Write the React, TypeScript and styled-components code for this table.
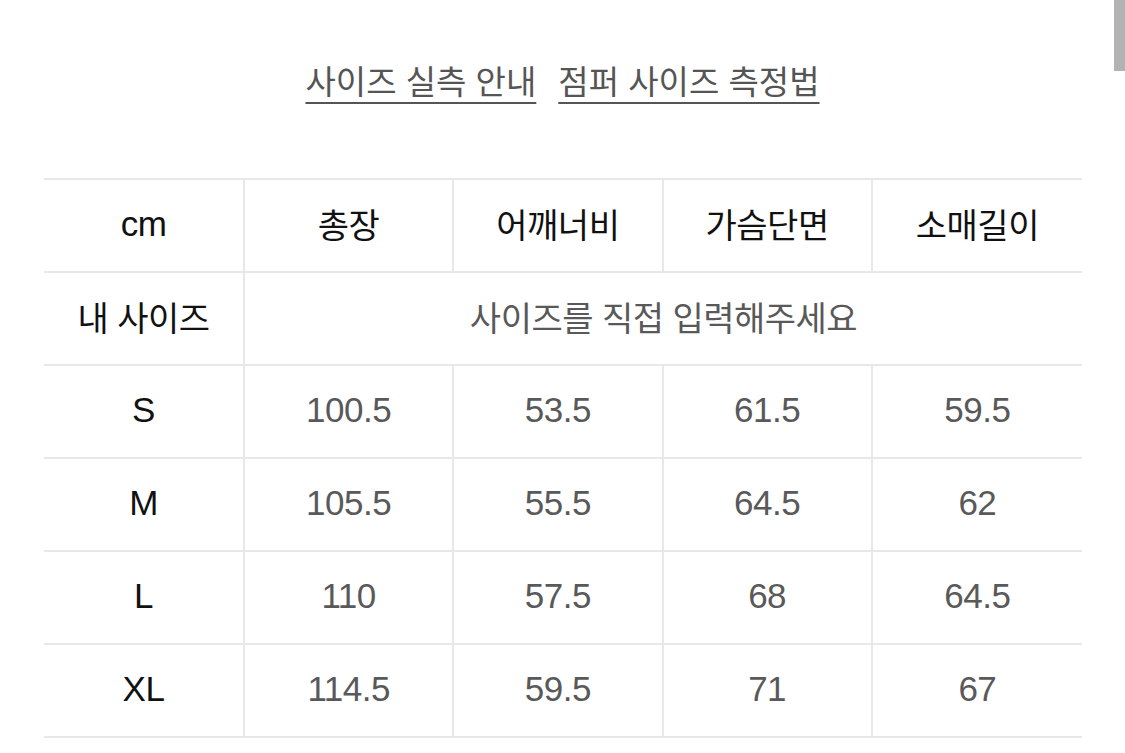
import React from "react";
import styled, { createGlobalStyle } from "styled-components";

const Global = createGlobalStyle`
  html, body { margin: 0; padding: 0; background: #fff; }
  body { font-family: "Liberation Sans", "Noto Sans CJK KR", sans-serif; overflow: hidden; }
`;

const Page = styled.div`
  position: relative;
  width: 1125px;
  height: 753px;
  background: #fff;
  padding: 0 44px;
  box-sizing: border-box;
`;

const Scrollbar = styled.div`
  position: absolute;
  top: 0;
  right: 0;
  width: 11px;
  height: 71px;
  background: #b3b3b3;
`;

const Links = styled.div`
  display: flex;
  justify-content: center;
  gap: 22px;
  padding-top: 61px;
  height: 178px;
  box-sizing: border-box;
`;

const LinkText = styled.a`
  font-family: "Liberation Sans", "Noto Sans CJK KR", sans-serif;
  font-size: 33px;
  line-height: 44px;
  color: #555;
  text-decoration: underline;
  text-decoration-thickness: 2px;
  text-underline-offset: 8px;
`;

const Table = styled.div`
  display: grid;
  grid-template-columns: 201px repeat(4, 1fr);
  width: 1038px;
  border-top: 2px solid #e8e8e8;
`;

const Cell = styled.div<{ $head?: boolean; $span?: number; $last?: boolean; $ko?: boolean }>`
  height: 93px;
  display: flex;
  align-items: center;
  justify-content: center;
  padding-bottom: 4px;
  box-sizing: border-box;
  border-bottom: 2px solid #e8e8e8;
  border-right: ${(p) => (p.$last ? "none" : "2px solid #e8e8e8")};
  font-size: ${(p) => (p.$ko ? "34px" : "35px")};
  letter-spacing: -0.5px;
  color: ${(p) => (p.$head ? "#111" : "#595959")};
  grid-column: ${(p) => (p.$span ? `span ${p.$span}` : "auto")};
`;

const headers = ["총장", "어깨너비", "가슴단면", "소매길이"];
const rows: [string, string[]][] = [
  ["S", ["100.5", "53.5", "61.5", "59.5"]],
  ["M", ["105.5", "55.5", "64.5", "62"]],
  ["L", ["110", "57.5", "68", "64.5"]],
  ["XL", ["114.5", "59.5", "71", "67"]],
];

export default function App() {
  return (
    <Page>
      <Global />
      <Scrollbar />
      <Links>
        <LinkText>사이즈 실측 안내</LinkText>
        <LinkText>점퍼 사이즈 측정법</LinkText>
      </Links>
      <Table>
        <Cell $head>cm</Cell>
        {headers.map((h, i) => (
          <Cell $head $ko key={h} $last={i === headers.length - 1}>
            {h}
          </Cell>
        ))}
        <Cell $head $ko>내 사이즈</Cell>
        <Cell $span={4} $last $ko>
          사이즈를 직접 입력해주세요
        </Cell>
        {rows.map(([size, vals]) => (
          <React.Fragment key={size}>
            <Cell $head>{size}</Cell>
            {vals.map((v, i) => (
              <Cell key={i} $last={i === vals.length - 1}>
                {v}
              </Cell>
            ))}
          </React.Fragment>
        ))}
      </Table>
    </Page>
  );
}
